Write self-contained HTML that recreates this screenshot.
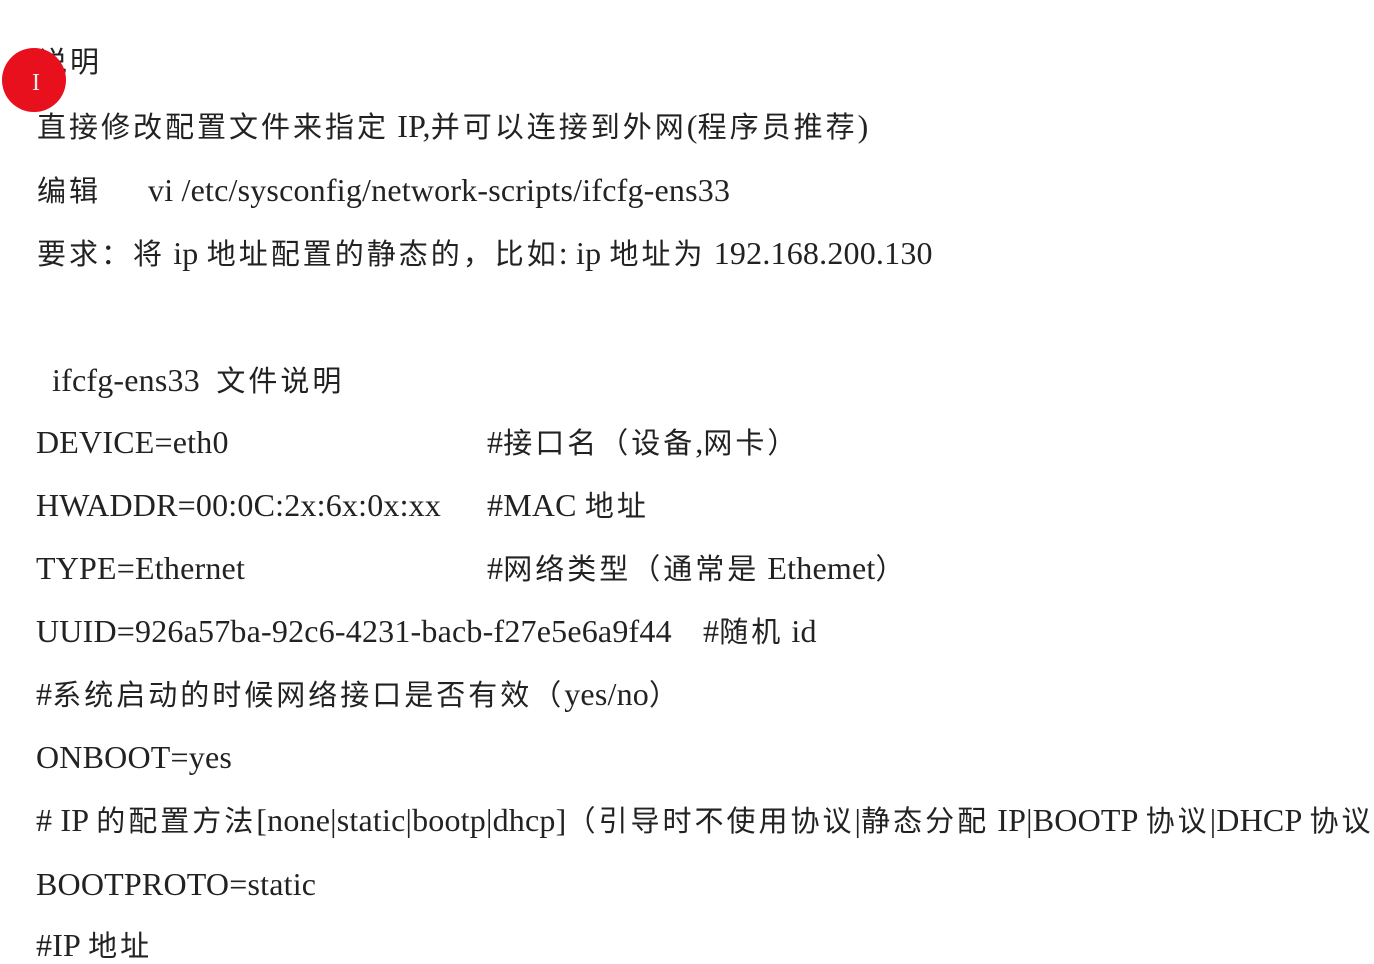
<!DOCTYPE html>
<html><head><meta charset="utf-8"><style>
body{margin:0;width:1374px;height:961px;background:#fff;overflow:hidden;position:relative;font-family:"Liberation Serif","Noto Sans CJK SC",serif;font-size:32px;color:#222}
.l{position:absolute;white-space:nowrap;line-height:34px;letter-spacing:0.2px}
.c{letter-spacing:3px;font-size:29px}
.dot{position:absolute;left:2px;top:48px;width:64px;height:64px;border-radius:50%;background:#e8101c}
</style></head><body>
<div class="l c" style="left:38px;top:46px">说明</div>
<div class="dot"></div>
<div class="l" style="left:32px;top:66px;font-size:24px;color:#eee">I</div>
<div class="l" style="left:37px;top:109px"><span class="c">直接修改配置文件来指定</span> IP,<span class="c">并可以连接到外网</span>(<span class="c">程序员推荐</span>)</div>
<div class="l" style="left:37px;top:173px"><span class="c">编辑</span></div>
<div class="l" style="left:148px;top:173px">vi /etc/sysconfig/network-scripts/ifcfg-ens33</div>
<div class="l" style="left:37px;top:236px"><span class="c">要求：将</span> ip <span class="c">地址配置的静态的，比如</span>: ip <span class="c">地址为</span> 192.168.200.130</div>
<div class="l" style="left:52px;top:363px">ifcfg-ens33 &nbsp;<span class="c">文件说明</span></div>
<div class="l" style="left:36px;top:425px">DEVICE=eth0</div>
<div class="l" style="left:487px;top:425px">#<span class="c">接口名（设备</span>,<span class="c">网卡）</span></div>
<div class="l" style="left:36px;top:488px">HWADDR=00:0C:2x:6x:0x:xx</div>
<div class="l" style="left:487px;top:488px">#MAC <span class="c">地址</span></div>
<div class="l" style="left:36px;top:551px">TYPE=Ethernet</div>
<div class="l" style="left:487px;top:551px">#<span class="c">网络类型（通常是</span> Ethemet<span class="c">）</span></div>
<div class="l" style="left:36px;top:614px">UUID=926a57ba-92c6-4231-bacb-f27e5e6a9f44</div>
<div class="l" style="left:703px;top:614px">#<span class="c">随机</span> id</div>
<div class="l" style="left:36px;top:677px">#<span class="c">系统启动的时候网络接口是否有效（</span>yes/no<span class="c">）</span></div>
<div class="l" style="left:36px;top:740px">ONBOOT=yes</div>
<div class="l" style="left:36px;top:803px"># IP <span class="c">的配置方法</span>[none|static|bootp|dhcp]<span class="c">（引导时不使用协议</span>|<span class="c">静态分配</span> IP|BOOTP <span class="c">协议</span>|DHCP <span class="c">协议</span></div>
<div class="l" style="left:36px;top:867px">BOOTPROTO=static</div>
<div class="l" style="left:36px;top:928px">#IP <span class="c">地址</span></div>
</body></html>
